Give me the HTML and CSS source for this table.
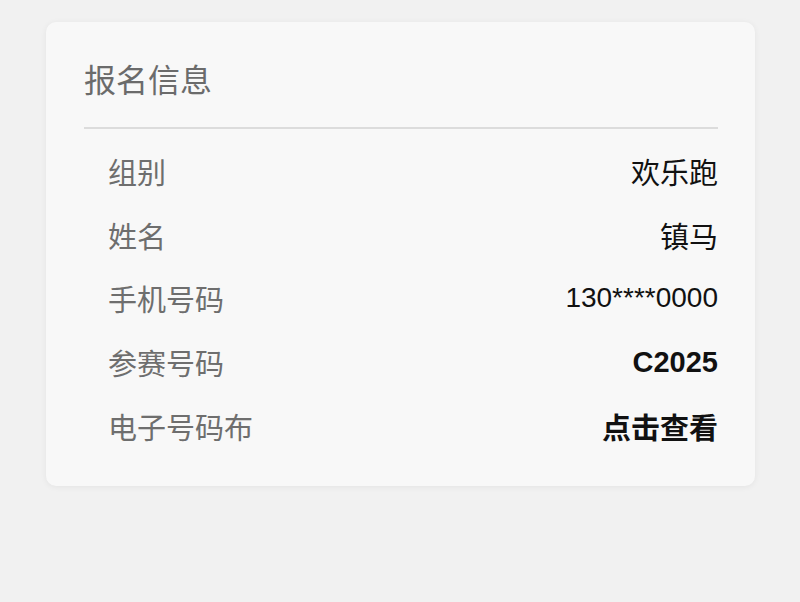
FILE: index.html
```html
<!DOCTYPE html>
<html lang="zh">
<head>
<meta charset="utf-8">
<link rel="stylesheet" href="styles.css">
</head>
<body>
<div class="card">
  <div class="title">报名信息</div>
  <div class="divider"></div>
  <div class="rows">
    <div class="row"><span class="label">组别</span><span class="value">欢乐跑</span></div>
    <div class="row"><span class="label">姓名</span><span class="value">镇马</span></div>
    <div class="row"><span class="label">手机号码</span><span class="value num">130****0000</span></div>
    <div class="row"><span class="label">参赛号码</span><span class="value bold">C2025</span></div>
    <div class="row"><span class="label">电子号码布</span><span class="value bold">点击查看</span></div>
  </div>
</div>
</body>
</html>
```

FILE: styles.css
```css
html, body {
  margin: 0;
  padding: 0;
  background: #f1f1f1;
  font-family: "Liberation Sans", "Noto Sans CJK SC", sans-serif;
}
body {
  width: 800px;
  height: 602px;
  overflow: hidden;
}
.card {
  margin: 22px 0 0 46px;
  width: 709px;
  box-sizing: border-box;
  padding: 37px 37px 28px 38px;
  background: #f8f8f8;
  border-radius: 10px;
  box-shadow: 0 1px 6px rgba(0,0,0,0.06);
}
.title {
  font-size: 32px;
  line-height: 44px;
  color: #6b6b6b;
}
.divider {
  height: 2px;
  background: #dcdcdc;
  margin-top: 24px;
}
.rows {
  margin-top: 10px;
  padding-left: 24px;
}
.row {
  display: flex;
  justify-content: space-between;
  align-items: center;
  height: 63.75px;
  font-size: 29px;
}
.label {
  color: #6e6e6e;
}
.value {
  color: #111;
}
.num {
  font-size: 28px;
}
.bold {
  font-weight: bold;
}
```
